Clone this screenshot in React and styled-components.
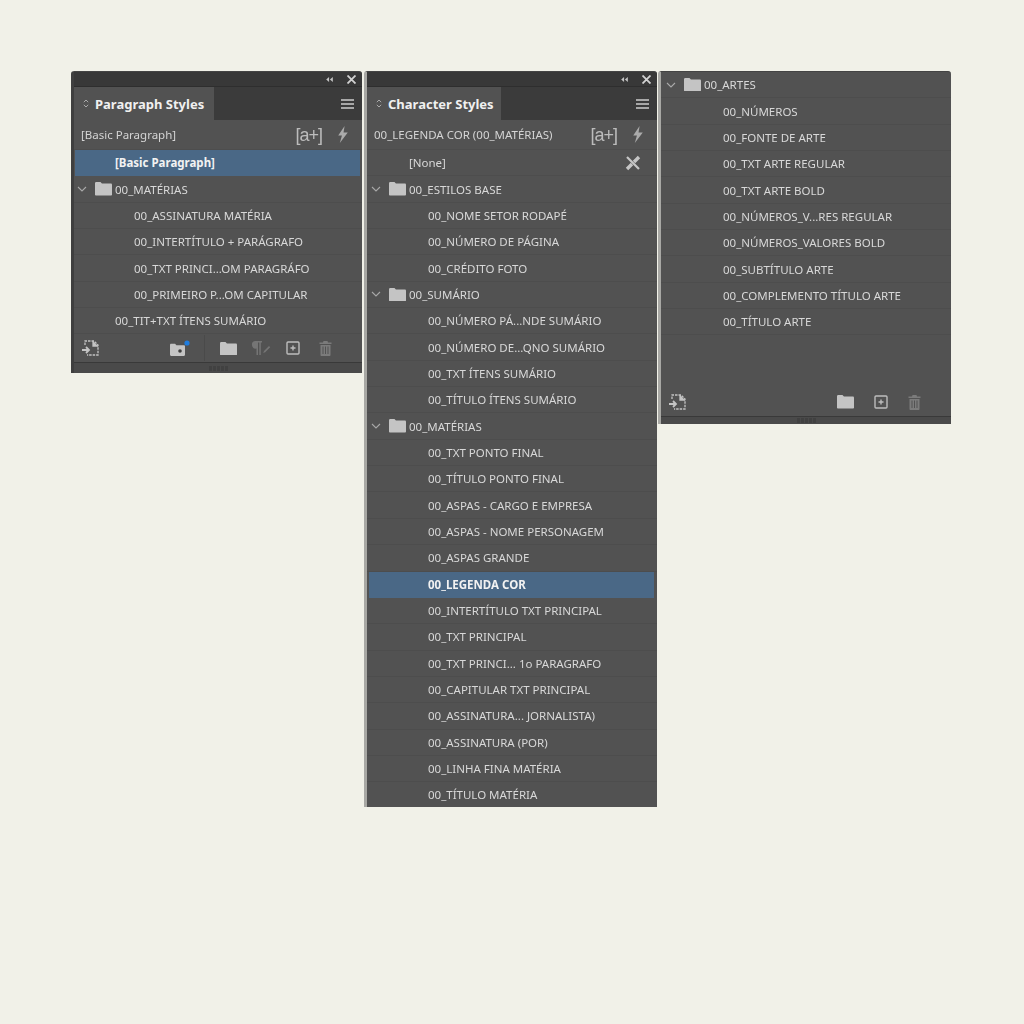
import React from 'react';
import styled, { createGlobalStyle } from 'styled-components';

const GlobalStyle = createGlobalStyle`
  html, body {
    margin: 0;
    padding: 0;
    background: #f1f1e8;
  }
`;

const Page = styled.div`
  width: 1024px;
  height: 1024px;
  box-sizing: border-box;
  padding: 71px 0 0 71px;
  display: flex;
  align-items: flex-start;
  background: #f1f1e8;
  font-family: "Noto Sans", "Open Sans", sans-serif;
  overflow: hidden;
`;

const Panel = styled.section`
  width: ${p => p.$width}px;
  height: ${p => p.$height}px;
  box-sizing: border-box;
  margin-left: ${p => p.$gap || 0}px;
  display: flex;
  flex-direction: column;
  flex: none;
  background: #525252;
  border-left: 3px solid ${p => p.$edge};
  border-top: 1px solid #444;
  border-radius: 3px 3px 0 0;
  overflow: hidden;
  filter: blur(0.45px);
`;

const TitleBar = styled.div`
  height: 15px;
  flex: none;
  box-sizing: border-box;
  display: flex;
  align-items: center;
  justify-content: flex-end;
  gap: 14px;
  padding: 0 6px 0 0;
  background: #383838;
  border-bottom: 1px solid #2e2e2e;
  color: #cfcfcf;
`;

const TabBar = styled.div`
  height: 33px;
  flex: none;
  display: flex;
  align-items: stretch;
  justify-content: space-between;
  background: #3b3b3b;
  padding-right: 8px;
`;

const Tab = styled.div`
  width: ${p => p.$width}px;
  display: flex;
  align-items: center;
  gap: 6px;
  padding-left: 9px;
  box-sizing: border-box;
  background: #525252;
  color: #f0f0f0;
  font-size: 13px;
  font-weight: 700;
`;

const MenuButton = styled.div`
  display: flex;
  align-items: center;
`;

const InfoRow = styled.div`
  height: 30px;
  flex: none;
  box-sizing: border-box;
  display: flex;
  align-items: center;
  justify-content: space-between;
  padding: 0 13px 0 7px;
  color: #d4d4d4;
  font-size: 11.5px;
  border-bottom: 1px solid #4d4d4d;
`;

const InfoTools = styled.div`
  display: flex;
  align-items: center;
  gap: 15px;
`;

const NewStyleMark = styled.span`
  font-family: "Liberation Sans", sans-serif;
  font-size: 18px;
  font-weight: 400;
  color: #bcbcbc;
  letter-spacing: -1px;
  line-height: 1;
`;

const Row = styled.div`
  height: 26.35px;
  flex: none;
  box-sizing: border-box;
  display: flex;
  align-items: center;
  margin: 0 ${p => (p.$selected ? p.$inset + 1 : 0)}px 0 ${p => (p.$selected ? p.$inset : 0)}px;
  padding-left: ${p => p.$indent - (p.$selected ? p.$inset : 0)}px;
  padding-right: 16px;
  justify-content: space-between;
  background: ${p => (p.$selected ? '#4a6886' : 'transparent')};
  color: ${p => (p.$selected ? '#f2f2f2' : '#d8d8d8')};
  font-size: 11.5px;
  font-weight: ${p => (p.$selected ? 700 : 400)};
  white-space: nowrap;
  border-bottom: 1px solid ${p => (p.$selected ? '#4a6886' : '#4d4d4d')};
`;

const GroupRow = styled.div`
  height: 26.35px;
  flex: none;
  box-sizing: border-box;
  display: flex;
  align-items: center;
  padding-left: ${p => p.$lead}px;
  color: #d8d8d8;
  font-size: 11.5px;
  white-space: nowrap;
  border-bottom: 1px solid #4d4d4d;
`;

const GroupFolder = styled.span`
  display: flex;
  margin: 0 3px 0 8px;
`;

const Spacer = styled.div`
  flex: 1;
`;

const Footer = styled.div`
  height: 29px;
  flex: none;
  box-sizing: border-box;
  display: flex;
  align-items: center;
  padding: 0 ${p => p.$right}px 0 8px;
  border-bottom: 1px solid #393939;
`;

const FooterTools = styled.div`
  margin-left: auto;
  display: flex;
  align-items: center;
  gap: ${p => p.$gap}px;
`;

const FooterTrash = styled.span`
  display: flex;
  margin-left: ${p => p.$push || 0}px;
`;

const Divider = styled.span`
  width: 1px;
  height: 26px;
  background: #4a4a4a;
`;

const Grip = styled.div`
  height: ${p => p.$height}px;
  flex: none;
  display: flex;
  align-items: center;
  justify-content: center;
  gap: 1px;
  background: #4a4a4a;
`;

const GripDot = styled.span`
  width: 3px;
  height: 5px;
  background: #414141;
`;

const Chevron = () => (
  <svg width="10" height="6" viewBox="0 0 10 6" fill="none" stroke="#a8a8a8" strokeWidth="1.1">
    <path d="M1 1l4 4 4-4" />
  </svg>
);

const Folder = ({ size = 17, color = '#c4c4c4' }) => (
  <svg width={size} height={size * 0.8} viewBox="0 0 17 13.6" fill={color}>
    <path d="M0 1.4C0 .6.5 0 1.2 0h4.3l1.4 1.6h8.9c.7 0 1.2.5 1.2 1.2v9.6c0 .7-.5 1.2-1.2 1.2H1.2C.5 13.6 0 13.1 0 12.4z" />
  </svg>
);

const PlusBox = ({ color = '#bdbdbd' }) => (
  <svg width="14" height="14" viewBox="0 0 14 14" fill="none" stroke={color} strokeWidth="1.4">
    <rect x="1" y="1" width="12" height="12" rx="1" />
    <path d="M4.5 7h5M7 4.5v5" />
  </svg>
);

const Trash = () => (
  <svg width="13" height="15" viewBox="0 0 13 15" fill="#7b7b7b">
    <path d="M4.5 0h4l.5 1.5h3.500V3H.5V1.500H4zM1.500 4h10v10c0 .6-.4 1-1 1h-8c-.6 0-1-.4-1-1zm2 1.500v7.500h1V5.500zm2.500 0v7.500h1V5.500zm2.500 0v7.500h1V5.500z" />
  </svg>
);

const LoadIcon = () => (
  <svg width="17" height="16" viewBox="0 0 17 16" fill="none" stroke="#c4c4c4" strokeWidth="1.3">
    <path d="M3 5V1h9l4 4v10H5" strokeDasharray="2.500 1" />
    <path d="M11 1v5h5" fill="#c4c4c4" />
    <path d="M0 10h6M4 7l3 3-3 3" strokeWidth="1.800" />
  </svg>
);

const FolderDot = () => (
  <svg width="20" height="16" viewBox="0 0 20 16">
    <path fill="#c4c4c4" d="M0 5c0-.7.5-1.200 1.100-1.200h4l1.300 1.500h7.500c.7 0 1.100.5 1.100 1.100v8.400c0 .7-.4 1.200-1.100 1.200H1.100C.5 15.800 0 15.300 0 14.600z" />
    <circle cx="10" cy="11" r="1.800" fill="#3e3e3e" />
    <circle cx="17" cy="3" r="2.600" fill="#1f7de0" />
  </svg>
);

const PilcrowCheck = () => (
  <svg width="20" height="14" viewBox="0 0 20 14" fill="#757575">
    <path d="M4 0h7v1.500H9.800V14H8.300V1.500H7V14H5.500V7.500A3.800 3.800 0 0 1 4 0z" />
    <path d="M13 10l5-5 1.200 1.200-5 5-2 .8z" />
  </svg>
);

const Bolt = () => (
  <svg width="12" height="17" viewBox="0 0 11 16" fill="#ababab">
    <path d="M7 0L1 9h3.500L2.500 16 10 6H6z" />
  </svg>
);

const ClearOverride = () => (
  <svg width="16" height="16" viewBox="0 0 16 16" fill="none" stroke="#c6c6c6">
    <path d="M2 2l12 12" strokeWidth="2.200" />
    <path d="M14 2L9 7M7 9l-5 5" strokeWidth="3.400" />
  </svg>
);

const CollapseArrows = () => (
  <svg width="7" height="5" viewBox="0 0 8 6" fill="#c4c4c4">
    <path d="M3.500 0v6L0 3zM8 0v6L4.500 3z" />
  </svg>
);

const CloseX = () => (
  <svg width="9" height="9" viewBox="0 0 9 9" stroke="#d2d2d2" strokeWidth="1.800">
    <path d="M.5.500l8 8M8.500.500l-8 8" />
  </svg>
);

const UpDown = () => (
  <svg width="6" height="9" viewBox="0 0 6 9" fill="none" stroke="#b4b4b4" strokeWidth="0.900">
    <path d="M.800 3.200L3 1l2.200 2.200M.800 5.800L3 8l2.200-2.200" />
  </svg>
);

const Menu = () => (
  <svg width="13" height="10" viewBox="0 0 13 10" fill="#a8a8a8">
    <path d="M0 0h13v2H0zM0 4h13v2H0zM0 8h13v2H0z" />
  </svg>
);

const Head = ({ title, tabWidth }) => (
  <>
    <TitleBar>
      <CollapseArrows />
      <CloseX />
    </TitleBar>
    <TabBar>
      <Tab $width={tabWidth}>
        <UpDown />
        {title}
      </Tab>
      <MenuButton>
        <Menu />
      </MenuButton>
    </TabBar>
  </>
);

const Info = ({ label }) => (
  <InfoRow>
    {label}
    <InfoTools>
      <NewStyleMark>[a+]</NewStyleMark>
      <Bolt />
    </InfoTools>
  </InfoRow>
);

const Group = ({ name, lead }) => (
  <GroupRow $lead={lead}>
    <Chevron />
    <GroupFolder>
      <Folder />
    </GroupFolder>
    {name}
  </GroupRow>
);

const GripBar = ({ height }) => (
  <Grip $height={height}>
    {[0, 1, 2, 3, 4].map(i => <GripDot key={i} />)}
  </Grip>
);

const Styles = ({ items, lead, top, child, inset = 1 }) =>
  items.map(item => {
    if (item.group) return <Group key={item.group} name={item.group} lead={lead} />;
    if (item.top) {
      return (
        <Row key={item.top} $indent={top} $inset={inset} $selected={item.selected}>
          {item.top}
          {item.icon}
        </Row>
      );
    }
    return (
      <Row key={item.name} $indent={child} $inset={inset} $selected={item.selected}>
        {item.name}
      </Row>
    );
  });

const names = list => list.map(name => ({ name }));

const paragraphItems = [
  { top: '[Basic Paragraph]', selected: true },
  { group: '00_MATÉRIAS' },
  ...names([
    '00_ASSINATURA MATÉRIA',
    '00_INTERTÍTULO + PARÁGRAFO',
    '00_TXT PRINCI...OM PARAGRÁFO',
    '00_PRIMEIRO P...OM CAPITULAR',
  ]),
  { top: '00_TIT+TXT ÍTENS SUMÁRIO' },
];

const characterItems = [
  { top: '[None]', icon: <ClearOverride /> },
  { group: '00_ESTILOS BASE' },
  ...names(['00_NOME SETOR RODAPÉ', '00_NÚMERO DE PÁGINA', '00_CRÉDITO FOTO']),
  { group: '00_SUMÁRIO' },
  ...names([
    '00_NÚMERO PÁ...NDE SUMÁRIO',
    '00_NÚMERO DE...QNO SUMÁRIO',
    '00_TXT ÍTENS SUMÁRIO',
    '00_TÍTULO ÍTENS SUMÁRIO',
  ]),
  { group: '00_MATÉRIAS' },
  ...names([
    '00_TXT PONTO FINAL',
    '00_TÍTULO PONTO FINAL',
    '00_ASPAS - CARGO E EMPRESA',
    '00_ASPAS - NOME PERSONAGEM',
    '00_ASPAS GRANDE',
  ]),
  { name: '00_LEGENDA COR', selected: true },
  ...names([
    '00_INTERTÍTULO TXT PRINCIPAL',
    '00_TXT PRINCIPAL',
    '00_TXT PRINCI... 1o PARAGRAFO',
    '00_CAPITULAR TXT PRINCIPAL',
    '00_ASSINATURA... JORNALISTA)',
    '00_ASSINATURA (POR)',
    '00_LINHA FINA MATÉRIA',
    '00_TÍTULO MATÉRIA',
  ]),
];

const artItems = [
  { group: '00_ARTES' },
  ...names([
    '00_NÚMEROS',
    '00_FONTE DE ARTE',
    '00_TXT ARTE REGULAR',
    '00_TXT ARTE BOLD',
    '00_NÚMEROS_V...RES REGULAR',
    '00_NÚMEROS_VALORES BOLD',
    '00_SUBTÍTULO ARTE',
    '00_COMPLEMENTO TÍTULO ARTE',
    '00_TÍTULO ARTE',
  ]),
];

const App = () => (
  <Page>
    <GlobalStyle />
    <Panel $width={291} $height={302} $edge="#3f3f3f">
      <Head title="Paragraph Styles" tabWidth={140} />
      <Info label="[Basic Paragraph]" />
      <Styles items={paragraphItems} lead={3} top={41} child={60} />
      <Footer $right={30}>
        <LoadIcon />
        <FooterTools $gap={14.5}>
          <FolderDot />
          <Divider />
          <Folder size={17} />
          <PilcrowCheck />
          <PlusBox />
          <FooterTrash $push={5}>
            <Trash />
          </FooterTrash>
        </FooterTools>
      </Footer>
      <GripBar height={10} />
    </Panel>

    <Panel $width={293} $height={736} $gap={2} $edge="#a8a8a4">
      <Head title="Character Styles" tabWidth={134} />
      <Info label="00_LEGENDA COR (00_MATÉRIAS)" />
      <Styles items={characterItems} lead={4} top={42} child={61} inset={2} />
    </Panel>

    <Panel $width={293} $height={353} $gap={1} $edge="#a8a8a4">
      <Styles items={artItems} lead={5} top={43} child={62} />
      <Spacer />
      <Footer $right={30}>
        <LoadIcon />
        <FooterTools $gap={20}>
          <Folder size={17} />
          <PlusBox />
          <FooterTrash>
            <Trash />
          </FooterTrash>
        </FooterTools>
      </Footer>
      <GripBar height={7} />
    </Panel>
  </Page>
);

export default App;
